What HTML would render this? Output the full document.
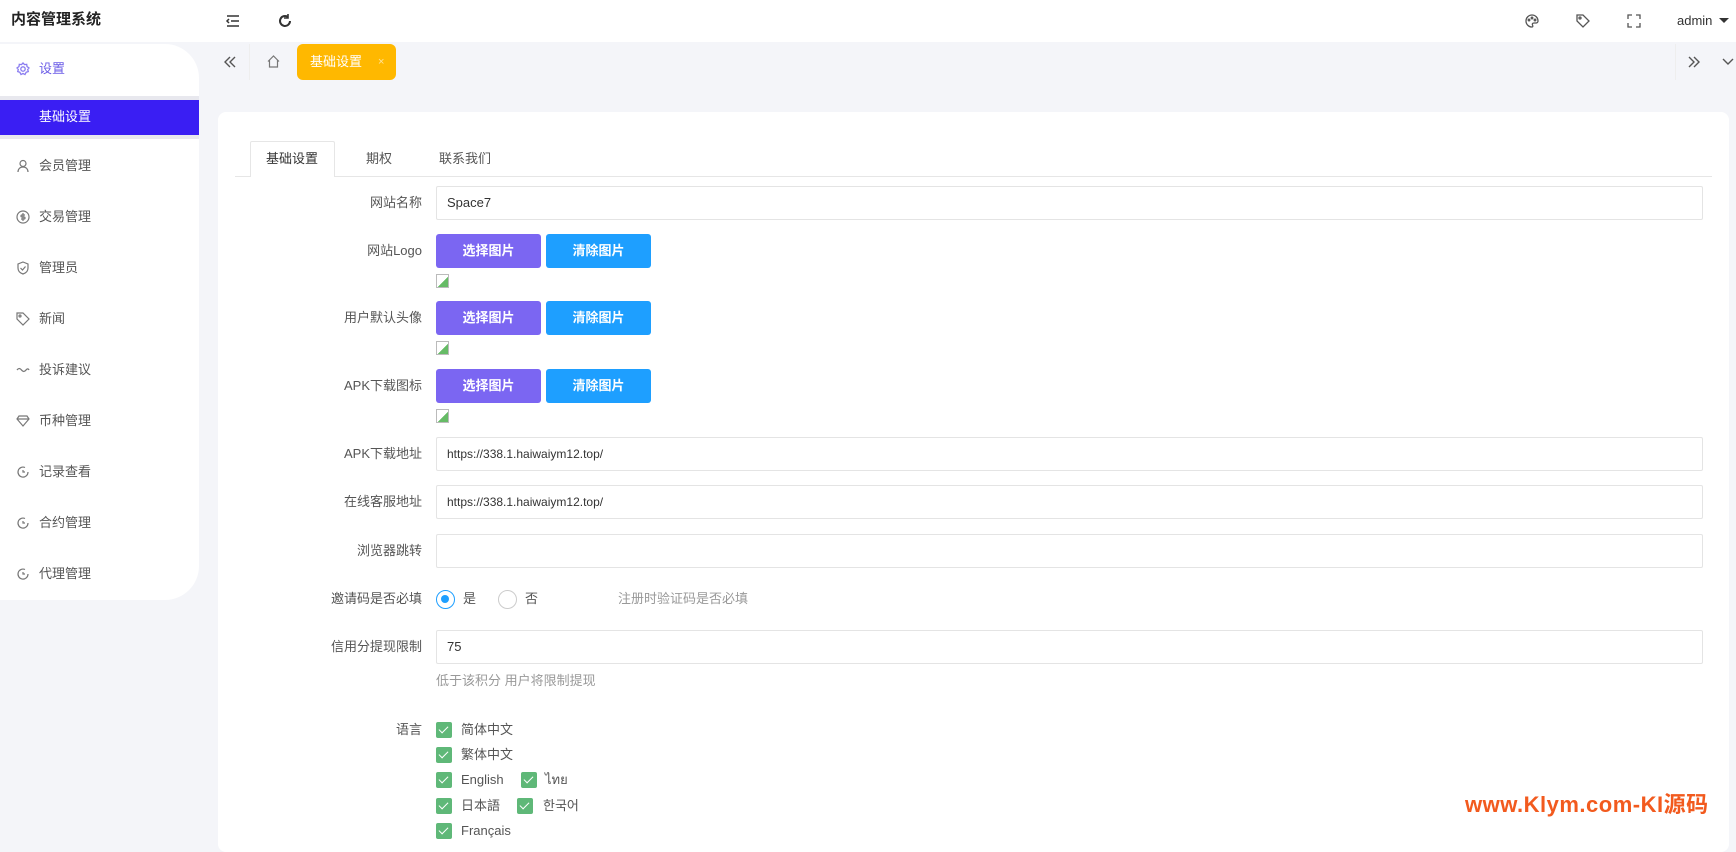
<!DOCTYPE html>
<html><head><meta charset="utf-8"><style>
*{box-sizing:border-box;margin:0;padding:0}
body{width:1736px;height:843px;overflow:hidden;background:#f4f5f9;font-family:"Liberation Sans","Noto Sans CJK SC",sans-serif;font-size:13px;line-height:16px;color:#333;position:relative}
.a{position:absolute}
.hdr{left:0;top:0;width:1736px;height:42px;background:#fff}
.side{left:0;top:44px;width:199px;height:556px;background:#fff;border-radius:0 34px 34px 0}
.mi{position:absolute;left:0;width:199px;height:20px;line-height:20px;color:#555}
.mi svg{position:absolute;left:16px;top:3px}
.mi span{position:absolute;left:39px}
.card{left:218px;top:112px;width:1511px;height:740px;background:#fff;border-radius:8px}
.lbl{position:absolute;width:200px;text-align:right;color:#555;left:222px}
.inp{position:absolute;left:436px;width:1267px;height:34px;border:1px solid #e4e4e4;border-radius:2px;padding-left:10px;line-height:32px;color:#333}
.b1,.b2{position:absolute;width:105px;height:34px;border-radius:3px;color:#fff;font-weight:bold;text-align:center;line-height:34px;font-size:13px}
.b1{left:436px;background:#7b66f2}.b2{left:546px;background:#1e9fff}
.bi{position:absolute;left:436px;width:13px;height:14px;border:1px solid #bbb;background:linear-gradient(135deg,#fff 55%,#6b6 55%)}
.cb{position:absolute;width:16px;height:16px;background:#5fb878;border-radius:2px}
.cb:after{content:"";position:absolute;left:5px;top:2px;width:4px;height:8px;border:solid #fff;border-width:0 1.5px 1.5px 0;transform:rotate(45deg)}
.ct{position:absolute;color:#555}
</style></head><body>
<div class="a hdr"></div>
<div class="a" style="left:11px;top:12px;font-size:15px;font-weight:bold;color:#222">内容管理系统</div>
<svg class="a" style="left:225px;top:13px" width="16" height="16" viewBox="0 0 16 16" fill="none" stroke="#333" stroke-width="1.5"><path d="M2 3h12M6 8h8M2 13h12M4 6l-2 2 2 2"/></svg>
<svg class="a" style="left:277px;top:13px" width="16" height="16" viewBox="0 0 16 16" fill="none" stroke="#333" stroke-width="2"><path d="M13 8a5 5 0 1 1-2-4"/><path d="M11 1v4h-4" stroke-width="1.6"/></svg>
<svg class="a" style="left:1524px;top:13px" width="16" height="16" viewBox="0 0 16 16" fill="none" stroke="#555" stroke-width="1.3"><path d="M8 2a6 6 0 1 0 0 12c1 0 1-1 .5-2s0-2 1.5-2h2a2 2 0 0 0 2-2A6 6 0 0 0 8 2z"/><circle cx="5" cy="7" r=".8"/><circle cx="8" cy="5" r=".8"/><circle cx="11" cy="7" r=".8"/></svg>
<svg class="a" style="left:1575px;top:13px" width="16" height="16" viewBox="0 0 16 16" fill="none" stroke="#555" stroke-width="1.3"><path d="M2 2h6l6 6-6 6-6-6z"/><circle cx="5" cy="5" r="1"/></svg>
<svg class="a" style="left:1627px;top:14px" width="14" height="14" viewBox="0 0 14 14" fill="none" stroke="#555" stroke-width="1.3"><path d="M1 5V1h4M9 1h4v4M13 9v4H9M5 13H1V9"/></svg>
<div class="a" style="left:1677px;top:13px;color:#333">admin</div>
<div class="a" style="left:1719px;top:18px;border:5px solid transparent;border-top-color:#333"></div>

<div class="a side"></div>
<div class="mi" style="top:59px;color:#6b5ce7"><svg width="14" height="14" viewBox="0 0 14 14" fill="none" stroke="#8a7cf0" stroke-width="1.3"><circle cx="7" cy="7" r="2.2"/><path d="M7 1l1.5 1.6 2.2-.3.3 2.2L13 6l-1.3 1.5.6 2.1-2.1.6L9 12.5 7 11.5 5 12.5 3.8 10.2l-2.1-.6.6-2.1L1 6l2-1.5.3-2.2 2.2.3z"/></svg><span>设置</span></div>
<div class="a" style="left:0;top:96px;width:199px;height:4px;background:#e8e8ee"></div>
<div class="a" style="left:0;top:100px;width:199px;height:35px;background:#3a1ef3"></div>
<div class="a" style="left:0;top:135px;width:199px;height:4px;background:#e8e8ee"></div>
<div class="a" style="left:39px;top:109px;color:#fff">基础设置</div>
<div class="mi" style="top:156px"><svg width="14" height="14" viewBox="0 0 14 14" fill="none" stroke="#777" stroke-width="1.2"><circle cx="7" cy="4.5" r="3"/><path d="M2 13c0-3 2-5 5-5s5 2 5 5"/></svg><span>会员管理</span></div>
<div class="mi" style="top:207px"><svg width="14" height="14" viewBox="0 0 14 14" fill="none" stroke="#777" stroke-width="1.2"><circle cx="7" cy="7" r="6"/><path d="M9 5H6a1 1 0 0 0 0 2h2a1 1 0 0 1 0 2H5M7 3v8"/></svg><span>交易管理</span></div>
<div class="mi" style="top:258px"><svg width="14" height="14" viewBox="0 0 14 14" fill="none" stroke="#777" stroke-width="1.2"><path d="M7 1l5 2v4c0 3-2 5-5 6-3-1-5-3-5-6V3z"/><path d="M4.5 7l2 2 3-3.5"/></svg><span>管理员</span></div>
<div class="mi" style="top:309px"><svg width="14" height="14" viewBox="0 0 14 14" fill="none" stroke="#777" stroke-width="1.2"><path d="M1 1h6l6 6-6 6-6-6z"/><circle cx="4" cy="4" r="1"/></svg><span>新闻</span></div>
<div class="mi" style="top:360px"><svg width="14" height="14" viewBox="0 0 14 14" fill="none" stroke="#777" stroke-width="1.3"><path d="M1 7c1.5-2 3-2 4.5 0s3 2 4.5 0 2.5-1 3 0"/></svg><span>投诉建议</span></div>
<div class="mi" style="top:411px"><svg width="14" height="14" viewBox="0 0 14 14" fill="none" stroke="#777" stroke-width="1.2"><path d="M3 2h8l2 3-6 7-6-7z M1 5h12"/></svg><span>币种管理</span></div>
<div class="mi" style="top:462px"><svg width="14" height="14" viewBox="0 0 14 14" fill="none" stroke="#777" stroke-width="1.2"><path d="M12 7A5 5 0 1 1 9 2.5"/><path d="M7 5v2h2"/></svg><span>记录查看</span></div>
<div class="mi" style="top:513px"><svg width="14" height="14" viewBox="0 0 14 14" fill="none" stroke="#777" stroke-width="1.2"><path d="M12 7A5 5 0 1 1 9 2.5"/><path d="M7 5v2h2"/></svg><span>合约管理</span></div>
<div class="mi" style="top:564px"><svg width="14" height="14" viewBox="0 0 14 14" fill="none" stroke="#777" stroke-width="1.2"><path d="M12 7A5 5 0 1 1 9 2.5"/><path d="M7 5v2h2"/></svg><span>代理管理</span></div>

<svg class="a" style="left:223px;top:55px" width="14" height="14" viewBox="0 0 14 14" fill="none" stroke="#555" stroke-width="1.4"><path d="M7 2L2 7l5 5M12 2L7 7l5 5"/></svg>
<div class="a" style="left:249px;top:44px;width:1px;height:36px;background:#eee"></div>
<svg class="a" style="left:266px;top:54px" width="15" height="15" viewBox="0 0 15 15" fill="none" stroke="#777" stroke-width="1.2"><path d="M2 7.5L7.5 2 13 7.5M3.5 6v7h8V6"/></svg>
<div class="a" style="left:297px;top:44px;width:99px;height:36px;background:#ffb800;border-radius:6px;color:#fff"><span style="position:absolute;left:13px;top:10px">基础设置</span><span style="position:absolute;left:81px;top:10px;font-size:11px;color:#ffe39a">×</span></div>
<div class="a" style="left:1675px;top:44px;width:1px;height:36px;background:#eee"></div>
<svg class="a" style="left:1687px;top:55px" width="14" height="14" viewBox="0 0 14 14" fill="none" stroke="#555" stroke-width="1.4"><path d="M2 2l5 5-5 5M7 2l5 5-5 5"/></svg>
<svg class="a" style="left:1721px;top:57px" width="14" height="10" viewBox="0 0 14 10" fill="none" stroke="#555" stroke-width="1.4"><path d="M2 2l5 5 5-5"/></svg>

<div class="a card"></div>
<div class="a" style="left:235px;top:176px;width:1477px;height:1px;background:#e6e6e6"></div>
<div class="a" style="left:250px;top:141px;width:85px;height:36px;background:#fff;border:1px solid #e6e6e6;border-bottom:none;border-radius:2px 2px 0 0"></div>
<div class="a" style="left:266px;top:151px;color:#333">基础设置</div>
<div class="a" style="left:366px;top:151px;color:#555">期权</div>
<div class="a" style="left:439px;top:151px;color:#555">联系我们</div>

<div class="lbl" style="top:195px">网站名称</div><div class="inp" style="top:186px">Space7</div>
<div class="lbl" style="top:243px">网站Logo</div><div class="b1" style="top:234px">选择图片</div><div class="b2" style="top:234px">清除图片</div><div class="bi" style="top:274px"></div>
<div class="lbl" style="top:310px">用户默认头像</div><div class="b1" style="top:301px">选择图片</div><div class="b2" style="top:301px">清除图片</div><div class="bi" style="top:341px"></div>
<div class="lbl" style="top:378px">APK下载图标</div><div class="b1" style="top:369px">选择图片</div><div class="b2" style="top:369px">清除图片</div><div class="bi" style="top:409px"></div>
<div class="lbl" style="top:446px">APK下载地址</div><div class="inp" style="top:437px;font-size:12px">https://338.1.haiwaiym12.top/</div>
<div class="lbl" style="top:494px">在线客服地址</div><div class="inp" style="top:485px;font-size:12px">https://338.1.haiwaiym12.top/</div>
<div class="lbl" style="top:543px">浏览器跳转</div><div class="inp" style="top:534px"></div>
<div class="lbl" style="top:591px">邀请码是否必填</div>
<div class="a" style="left:436px;top:590px;width:19px;height:19px;border:1.5px solid #1e9fff;border-radius:50%"><div style="margin:4px;width:8px;height:8px;border-radius:50%;background:#1e9fff"></div></div>
<div class="ct" style="left:463px;top:591px">是</div>
<div class="a" style="left:498px;top:590px;width:19px;height:19px;border:1.5px solid #ccc;border-radius:50%"></div>
<div class="ct" style="left:525px;top:591px">否</div>
<div class="ct" style="left:618px;top:591px;color:#999">注册时验证码是否必填</div>
<div class="lbl" style="top:639px">信用分提现限制</div><div class="inp" style="top:630px">75</div>
<div class="ct" style="left:436px;top:673px;color:#999">低于该积分 用户将限制提现</div>
<div class="lbl" style="top:722px">语言</div>
<div class="cb" style="left:436px;top:722px"></div><div class="ct" style="left:461px;top:722px">简体中文</div>
<div class="cb" style="left:436px;top:747px"></div><div class="ct" style="left:461px;top:747px">繁体中文</div>
<div class="cb" style="left:436px;top:772px"></div><div class="ct" style="left:461px;top:772px">English</div>
<div class="cb" style="left:521px;top:772px"></div><div class="ct" style="left:545px;top:772px">ไทย</div>
<div class="cb" style="left:436px;top:798px"></div><div class="ct" style="left:461px;top:798px">日本語</div>
<div class="cb" style="left:517px;top:798px"></div><div class="ct" style="left:543px;top:798px">한국어</div>
<div class="cb" style="left:436px;top:823px"></div><div class="ct" style="left:461px;top:823px">Français</div>

<div class="a" style="left:1465px;top:792px;font-size:22px;line-height:26px;font-weight:bold;color:#f25a1e;letter-spacing:0.5px">www.Klym.com-KI源码</div>
</body></html>
